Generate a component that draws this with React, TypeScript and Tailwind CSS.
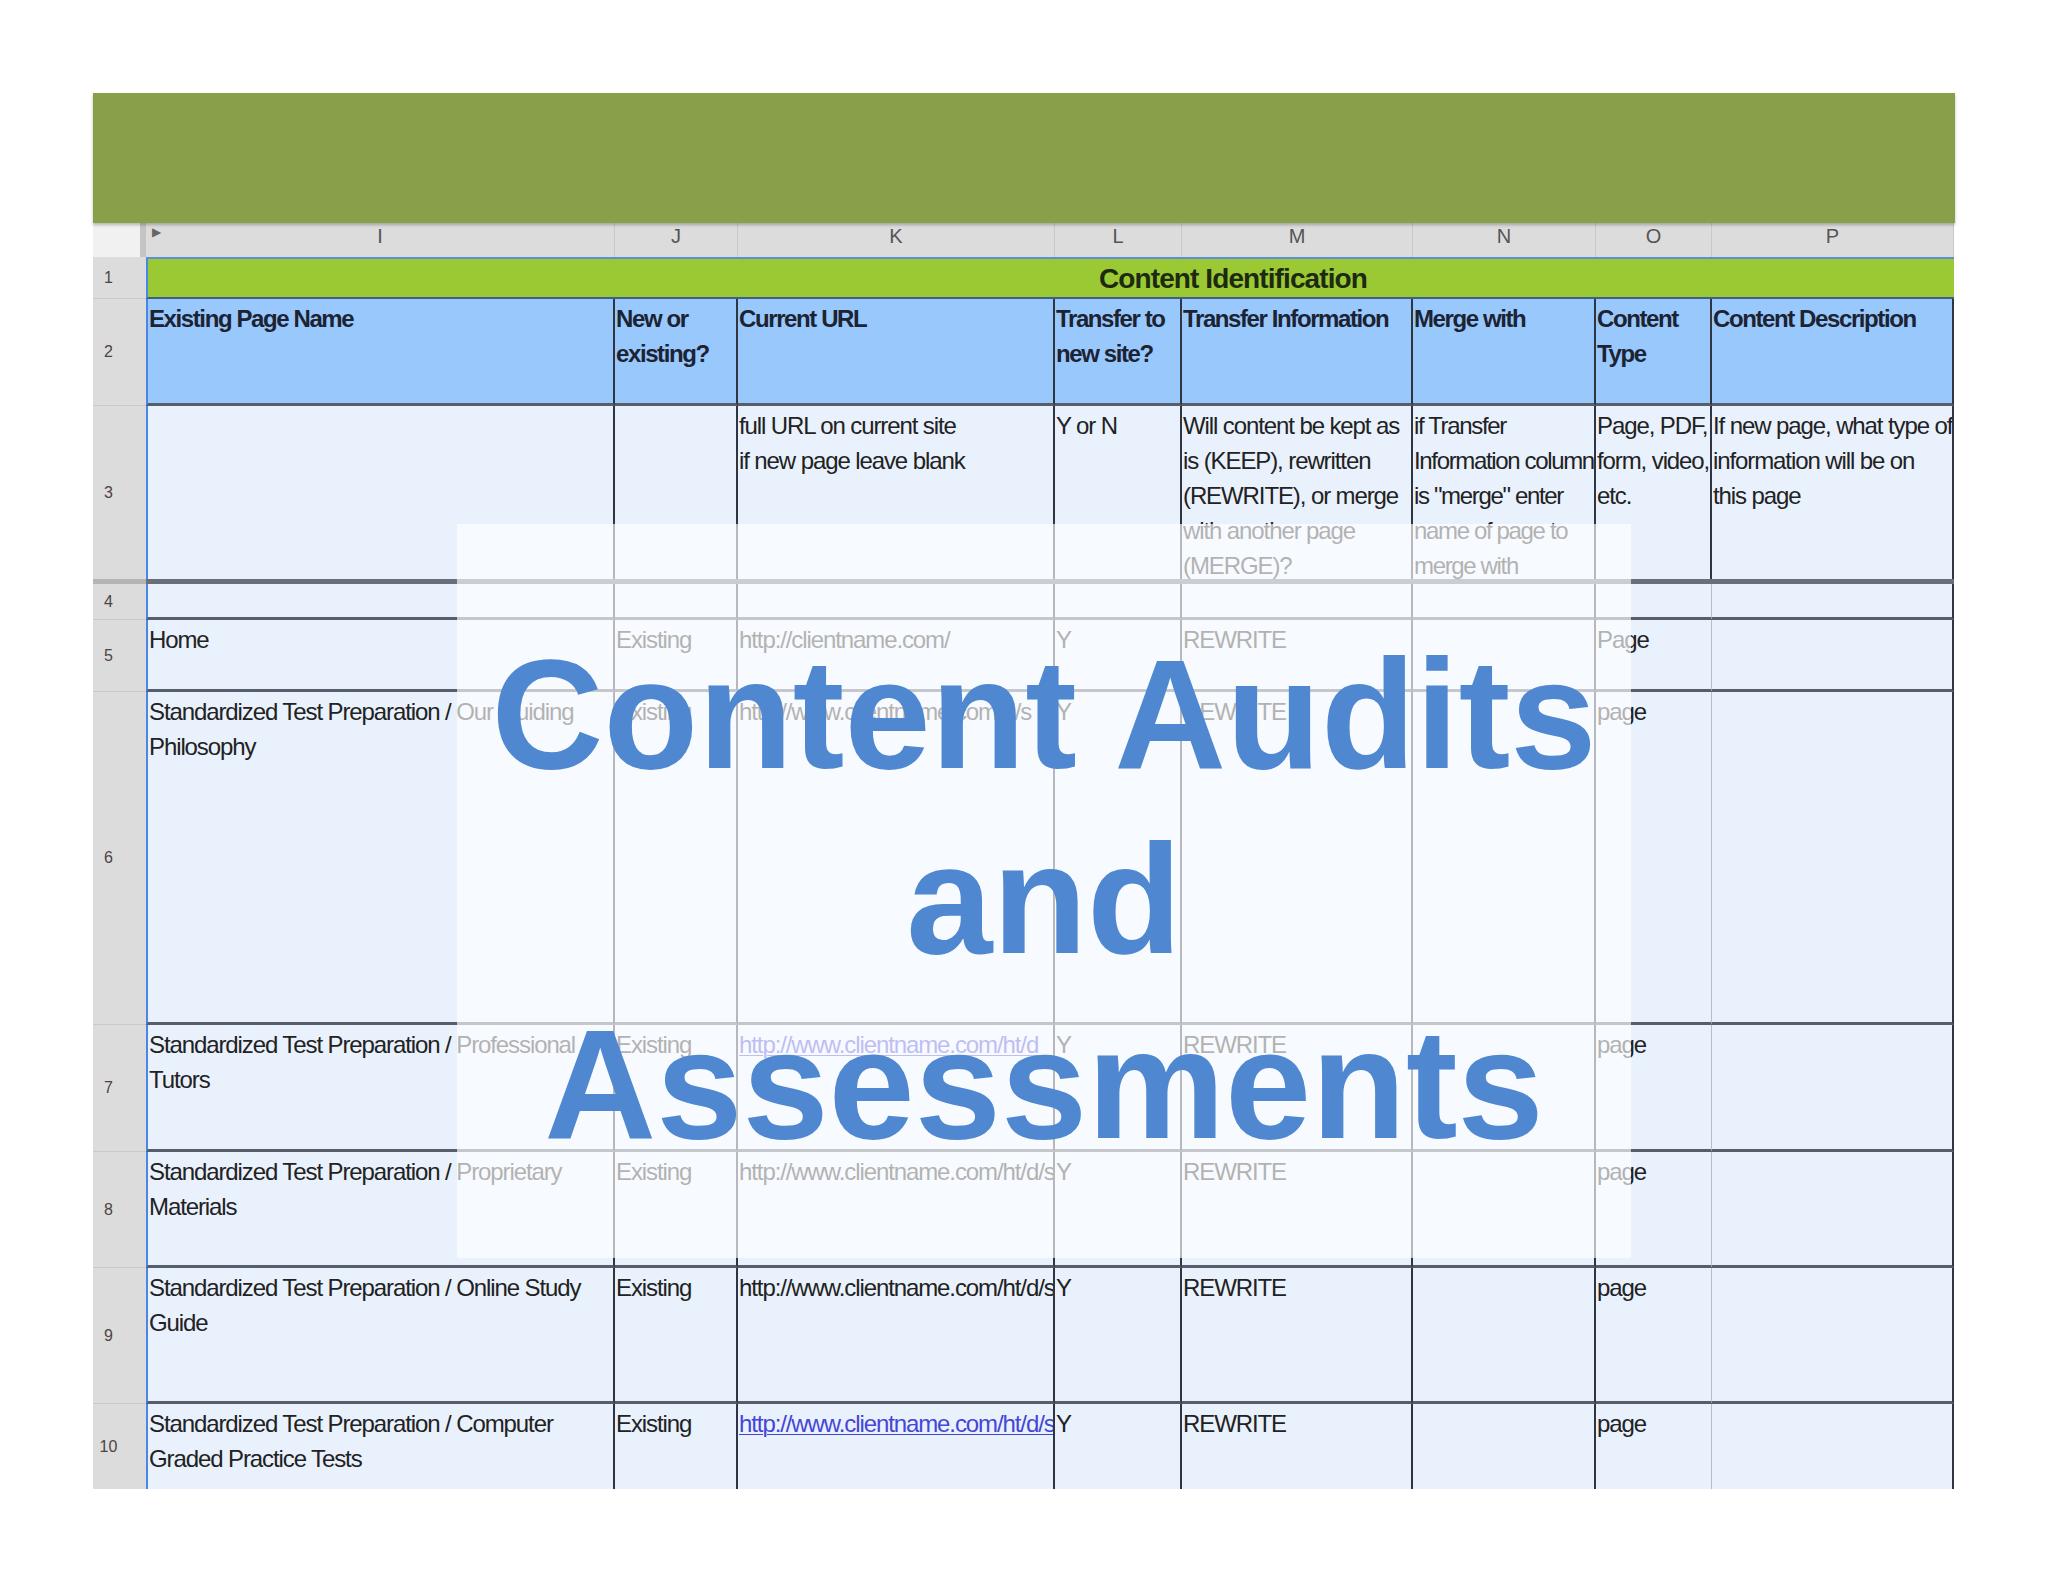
import clsx from "clsx"

const COLS = "grid grid-cols-[53px_469px_123px_317px_127px_231px_183px_116px_242px]"
const DARK = "border-r-2 border-r-[#2f3542]"

type Row = {
  n: string
  h: string
  cells: string[][]
  link?: boolean
}

const LETTERS = ["I", "J", "K", "L", "M", "N", "O", "P"]

const HEADERS: string[][] = [
  ["Existing Page Name"],
  ["New or", "existing?"],
  ["Current URL"],
  ["Transfer to", "new site?"],
  ["Transfer Information"],
  ["Merge with"],
  ["Content", "Type"],
  ["Content Description"],
]

const GUIDE: string[][] = [
  [],
  [],
  ["full URL on current site", "if new page leave blank"],
  ["Y or N"],
  ["Will content be kept as", "is (KEEP), rewritten", "(REWRITE), or merge", "with another page", "(MERGE)?"],
  ["if Transfer", "Information column", "is \"merge\" enter", "name of page to", "merge with"],
  ["Page, PDF,", "form, video,", "etc."],
  ["If new page, what type of", "information will be on", "this page"],
]

const URL = "http://www.clientname.com/ht/d/s"

const ROWS: Row[] = [
  { n: "4", h: "h-[36px]", cells: [[], [], [], [], [], [], [], []] },
  {
    n: "5",
    h: "h-[72px]",
    cells: [["Home"], ["Existing"], ["http://clientname.com/"], ["Y"], ["REWRITE"], [], ["Page"], []],
  },
  {
    n: "6",
    h: "h-[333px]",
    cells: [["Standardized Test Preparation / Our Guiding", "Philosophy"], ["Existing"], ["http://www.clientname.com/d/s"], ["Y"], ["REWRITE"], [], ["page"], []],
  },
  {
    n: "7",
    h: "h-[127px]",
    link: true,
    cells: [["Standardized Test Preparation / Professional", "Tutors"], ["Existing"], ["http://www.clientname.com/ht/d"], ["Y"], ["REWRITE"], [], ["page"], []],
  },
  {
    n: "8",
    h: "h-[116px]",
    cells: [["Standardized Test Preparation / Proprietary", "Materials"], ["Existing"], [URL], ["Y"], ["REWRITE"], [], ["page"], []],
  },
  {
    n: "9",
    h: "h-[136px]",
    cells: [["Standardized Test Preparation / Online Study", "Guide"], ["Existing"], [URL], ["Y"], ["REWRITE"], [], ["page"], []],
  },
  {
    n: "10",
    h: "h-[85px]",
    link: true,
    cells: [["Standardized Test Preparation / Computer", "Graded Practice Tests"], ["Existing"], [URL], ["Y"], ["REWRITE"], [], ["page"], []],
  },
]

function RowNum({ n, last }: { n: string; last?: boolean }) {
  return (
    <div
      className={clsx(
        "flex items-center justify-center bg-[#dcdcdc] pr-[22px] text-[16px] tracking-normal text-[#4d4343]",
        !last && "border-b border-[#c9c9c9]"
      )}
    >
      {n}
    </div>
  )
}

function Cell({
  lines,
  col,
  bold,
  bg,
  lightO,
  noBottom,
  link,
  tight,
}: {
  lines: string[]
  col: number
  bold?: boolean
  bg: string
  lightO?: boolean
  noBottom?: boolean
  link?: boolean
  tight?: boolean
}) {
  return (
    <div
      className={clsx(
        "overflow-hidden pl-[1px] pt-[2px]",
        bg,
        col === 0 && "border-l-2 border-l-[#4a86e8]",
        col === 6 && lightO ? "border-r border-r-[#b7bcc6]" : DARK,
        !noBottom && "border-b-[3px] border-b-[#565e6c]",
        bold
          ? "font-bold tracking-[-1.4px] text-[#1c2333]"
          : tight
            ? "tracking-[-1.35px] text-[#222]"
            : "tracking-[-1.1px] text-[#222]"
      )}
    >
      {lines.map((l) => (
        <div
          key={l}
          className={clsx(
            "whitespace-nowrap leading-[35px]",
            link && col === 2 && "text-[#4646d6] underline decoration-1 underline-offset-2"
          )}
        >
          {l}
        </div>
      ))}
    </div>
  )
}

export default function App() {
  return (
    <div className="relative min-h-[1582px] w-[2048px] bg-white pl-[93px] pt-[93px] font-['Liberation_Sans',Arial,sans-serif]">
      <div className="w-[1862px]">
        {/* slide title band */}
        <div className="relative z-10 h-[130px] bg-[#89a04b] shadow-[0_2px_3px_rgba(0,0,0,0.25)]" />

        {/* column letters */}
        <div className={clsx(COLS, "h-[34px]")}>
          <div className="flex">
            <div className="w-[47px] bg-[#f1f1f1]" />
            <div className="w-[6px] bg-[#c4c4c4]" />
          </div>
          {LETTERS.map((l, i) => (
            <div
              key={l}
              className="relative border-r border-[#c8c8c8] bg-[#dcdcdc] pt-[3px] text-center text-[20px] leading-none text-[#555]"
            >
              {i === 0 && <span className="absolute left-[6px] top-[3px] text-[12px] text-[#666]">▶</span>}
              {l}
            </div>
          ))}
        </div>

        {/* row 1 */}
        <div className={clsx(COLS, "h-[42px]")}>
          <RowNum n="1" />
          <div className="col-span-8 border-y-2 border-l-2 border-t-[#5b8fd8] border-b-[#3f5f86] border-l-[#4a86e8] bg-[#9bc934] pl-[951px] pt-[3px] text-[28px] font-bold leading-[34px] tracking-[-0.9px] text-[#1d2a12]">
            Content Identification
          </div>
        </div>

        <div className="text-[24px]">
          {/* row 2 */}
          <div className={clsx(COLS, "h-[107px]")}>
            <RowNum n="2" />
            {HEADERS.map((c, i) => (
              <Cell key={i} lines={c} col={i} bold bg="bg-[#99c8fc]" />
            ))}
          </div>

          {/* row 3 */}
          <div className={clsx(COLS, "h-[173px]")}>
            <RowNum n="3" last />
            {GUIDE.map((c, i) => (
              <Cell key={i} lines={c} col={i} bg="bg-[#e9f1fd]" noBottom tight={i === 5} />
            ))}
          </div>

          {/* frozen pane split */}
          <div className={clsx(COLS, "h-[5px]")}>
            <div className="bg-[#b4b4b4]" />
            <div className="col-span-8 bg-[#69707c]" />
          </div>

          {ROWS.map((r, ri) => (
            <div key={r.n} className={clsx(COLS, r.h)}>
              <RowNum n={r.n} last={ri === ROWS.length - 1} />
              {r.cells.map((c, i) => (
                <Cell
                  key={i}
                  lines={c}
                  col={i}
                  bg="bg-[#e9f1fd]"
                  lightO
                  link={r.link}
                  noBottom={ri === ROWS.length - 1}
                />
              ))}
            </div>
          ))}
        </div>
      </div>

      {/* title card over the sheet */}
      <div className="absolute left-[457px] top-[524px] flex h-[734px] w-[1174px] flex-col items-center bg-white/65 pt-[98px] text-[155px] font-bold leading-[185px] text-[#4f88d0]">
        <div className="whitespace-nowrap">Content Audits</div>
        <div>and</div>
        <div>Assessments</div>
      </div>
    </div>
  )
}
